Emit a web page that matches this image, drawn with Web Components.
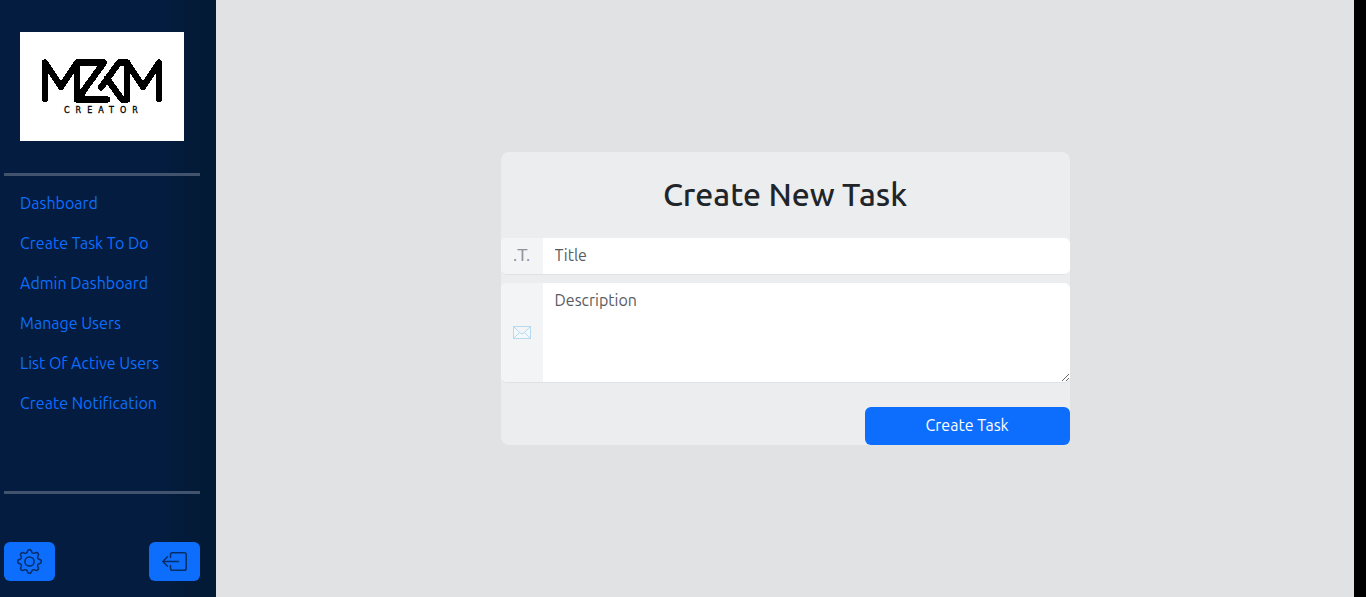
<!DOCTYPE html>
<html lang="en">
<head>
<meta charset="utf-8">
<title>Create New Task</title>
<style>
body { margin: 0; background: #000; color: #212529; font: 16px/24px Ubuntu, "Noto Sans", sans-serif; }
</style>
</head>
<body>
<task-app></task-app>
<script>
const define = (name, html, setup) => customElements.define(name, class extends HTMLElement {
  constructor() {
    super();
    const t = document.createElement('template');
    t.innerHTML = '<style>*{box-sizing:border-box}</style>' + html;
    this.attachShadow({ mode: 'open' }).append(t.content.cloneNode(true));
  }
  connectedCallback() { if (setup) setup(this, this.shadowRoot); }
});

define('brand-logo', `
<style>
:host { display: block; padding: 32px 16px; }
svg { display: block; width: 100%; background: #fff; }
text { font: 400 8px "DejaVu Sans", sans-serif; letter-spacing: 6px; stroke: #000; stroke-width: .3px; }
</style>
<svg viewBox="0 0 164 109" role="img" aria-label="MZKM Creator" shape-rendering="crispEdges">
  <g fill="none" stroke="#000" stroke-width="6.4" stroke-linecap="round" stroke-linejoin="round">
    <path d="M25 67V30.500L41 55L57 30.500V67.500L84 30.500H58"/>
    <path d="M57 67.500H87"/>
    <path d="M81 55.500L99 30.500H107V67.500H102L87 46.500"/>
    <path d="M107 30.500L123 55L139 30.500V67"/>
  </g>
  <path d="M54 62L60 58L66 61L62 70H57L54 67Z"/>
  <text x="44" y="81">CREATOR</text>
</svg>`);

define('side-link', `
<style>
:host { display: block; }
a { display: block; padding: 8px 16px; color: #0d6efd; text-decoration: none; }
</style>
<a href="#"><slot></slot></a>`, (el, root) => { root.querySelector('a').href = el.getAttribute('to') || '#'; });

define('icon-button', `
<style>
:host { display: block; }
button { display: block; border: 0; border-radius: 6px; padding: 7px 13px; background: #0d6efd; color: #062d66; cursor: pointer; }
::slotted(svg) { display: block; width: 25px; height: 25px; }
</style>
<button type="button"><slot></slot></button>`, (el, root) => root.querySelector('button').setAttribute('aria-label', el.getAttribute('label')));

define('side-bar', `
<style>
:host { display: flex; flex-direction: column; padding: 0 16px 16px 4px; background: linear-gradient(90deg, #041c40 72%, #031b38 88%, #031a36); }
hr { width: 100%; height: 3px; margin: 0; border: 0; background: #42536e; }
nav { flex: 1; padding: 7px 0 64px; }
footer { display: flex; justify-content: space-between; padding-top: 48px; }
</style>
<brand-logo></brand-logo>
<hr>
<nav>
  <side-link to="#dashboard">Dashboard</side-link>
  <side-link to="#create-task">Create Task To Do</side-link>
  <side-link to="#admin">Admin Dashboard</side-link>
  <side-link to="#users">Manage Users</side-link>
  <side-link to="#active-users">List Of Active Users</side-link>
  <side-link to="#create-notification">Create Notification</side-link>
</nav>
<hr>
<footer>
  <icon-button label="Settings"><svg viewBox="0 0 25 25" fill="none" stroke="currentColor" stroke-width="1.5" stroke-linejoin="round"><circle cx="12.5" cy="12.5" r="4.6"/><path id="gear"/></svg></icon-button>
  <icon-button label="Log out"><svg viewBox="0 0 25 25" fill="none" stroke="currentColor" stroke-width="1.5" stroke-linecap="round" stroke-linejoin="round"><path d="M8.500 8.500V5.500Q8.500 3.700 10.300 3.700H22.500Q24.200 3.700 24.200 5.500V19.500Q24.200 21.300 22.500 21.300H10.300Q8.500 21.300 8.500 19.500V16.500M16.500 12.500H.8M5.500 7.800L.8 12.500L5.500 17.200"/></svg></icon-button>
</footer>`, (el, root) => {
  // Eight rounded teeth around the hub
  const points = [];
  for (let i = 0; i < 96; i++) {
    const a = i * Math.PI / 48;
    const wave = Math.cos(8 * a);
    const r = 10.4 + 1.4 * Math.tanh(1.4 * wave) / Math.tanh(1.4);
    points.push((12.5 + r * Math.cos(a)).toFixed(2) + ' ' + (12.5 + r * Math.sin(a)).toFixed(2));
  }
  root.getElementById('gear').setAttribute('d', 'M' + points.join('L') + 'Z');
});

define('form-row', `
<style>
:host { display: flex; margin-bottom: 8px; border-bottom: 1px solid #dee2e6; border-radius: 6px; overflow: hidden; background: #fff; }
label { display: flex; flex: none; align-items: center; justify-content: center; width: 42px; background: #f3f4f6; color: #919396; font-family: "DejaVu Sans", sans-serif; }
::slotted(svg) { display: block; width: 18px; height: 13px; }
input, textarea { display: block; flex: 1; min-width: 0; margin: 0; border: 0; outline: 0; padding: 5px 12px 7px; background: #fff; color: #212529; font: inherit; line-height: 24px; }
textarea { height: 99px; resize: vertical; }
::placeholder { color: #595c5f; opacity: 1; }
</style>
<label for="field"><slot></slot></label>`, (el, root) => {
  if (root.getElementById('field')) return;
  const f = document.createElement(el.hasAttribute('multiline') ? 'textarea' : 'input');
  f.id = 'field';
  f.placeholder = el.getAttribute('name');
  f.setAttribute('aria-label', el.getAttribute('name'));
  root.append(f);
});

define('task-form', `
<style>
:host { display: block; }
form { background: #ebedef; border-radius: 8px; }
h1 { margin: 0; padding: 23px 0 25px; text-align: center; font-size: 32px; line-height: 38px; font-weight: 500; }
.actions { display: flex; justify-content: flex-end; padding-top: 16px; }
button { width: 36%; border: 0; border-radius: 6px; padding: 6px 12px 8px; background: #0d6efd; color: #fff; font: inherit; line-height: 24px; cursor: pointer; }
</style>
<form>
  <h1>Create New Task</h1>
  <form-row name="Title">.T.</form-row>
  <form-row name="Description" multiline><svg viewBox="0 0 18 13" fill="#f3f8fb" stroke="#b5d9ef"><path d="M.5.5H17.500V12.500H.5ZM.5 12.500L6.500 6.500M17.500 12.500L11.500 6.500M.5.5L7.500 7.200Q9 8.500 10.500 7.200L17.500.5"/></svg></form-row>
  <div class="actions"><button type="submit">Create Task</button></div>
</form>`);

define('task-app', `
<style>
:host { display: grid; grid-template-columns: 216px 1fr; min-height: 100vh; margin-right: 12px; }
main { display: flex; align-items: center; justify-content: center; background: #e1e2e4; }
task-form { width: 50%; }
</style>
<side-bar></side-bar>
<main><task-form></task-form></main>`);
</script>
</body>
</html>
